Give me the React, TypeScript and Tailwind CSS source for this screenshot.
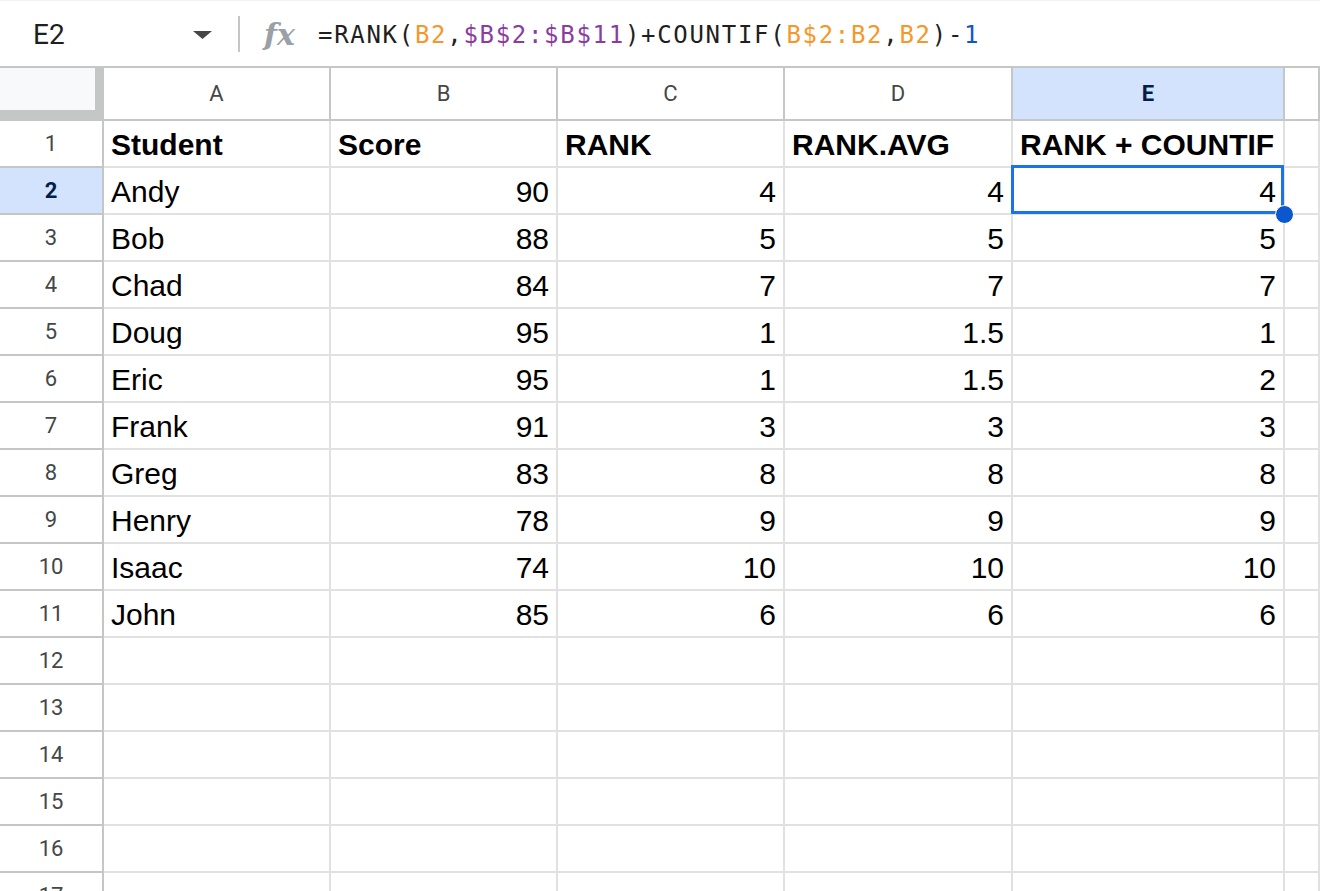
const rows: (string | number)[][] = [
  ['Andy', 90, 4, 4, 4],
  ['Bob', 88, 5, 5, 5],
  ['Chad', 84, 7, 7, 7],
  ['Doug', 95, 1, 1.5, 1],
  ['Eric', 95, 1, 1.5, 2],
  ['Frank', 91, 3, 3, 3],
  ['Greg', 83, 8, 8, 8],
  ['Henry', 78, 9, 9, 9],
  ['Isaac', 74, 10, 10, 10],
  ['John', 85, 6, 6, 6],
]

const headers = ['Student', 'Score', 'RANK', 'RANK.AVG', 'RANK + COUNTIF']
const letters = ['A', 'B', 'C', 'D', 'E', 'F']

function FormulaBar() {
  return (
    <div className="h-[68px] flex items-center border-t border-[#f1f3f4] border-b-2 border-b-[#c4c7c5] bg-white">
      <div className="w-[238px] flex items-center justify-between pl-[33px] pr-[26px] pt-[2px]">
        <span className="text-[28px] text-[#1f1f1f] font-['Roboto',sans-serif]">E2</span>
        <svg width="19" height="8" viewBox="0 0 19 8">
          <polygon points="0,0 19,0 9.5,8" fill="#444746" />
        </svg>
      </div>
      <div className="w-[2px] h-[36px] bg-[#c4c7c5]" />
      <span className="ml-[24px] w-[32px] text-[30px] italic font-bold text-[#9aa0a6] font-['DejaVu_Serif',serif] leading-none pt-[2px]">
        fx
      </span>
      <div className="ml-[22px] pt-[2px] text-[24px] tracking-[1.7px] whitespace-nowrap text-[#1f1f1f] font-['DejaVu_Sans_Mono',monospace]">
        <span>=RANK(</span>
        <span className="text-[#f6972b]">B2</span>
        <span>,</span>
        <span className="text-[#8b3d9f]">$B$2:$B$11</span>
        <span>)+COUNTIF(</span>
        <span className="text-[#f6972b]">B$2:B2</span>
        <span>,</span>
        <span className="text-[#f6972b]">B2</span>
        <span>)-</span>
        <span className="text-[#1155cc]">1</span>
      </div>
    </div>
  )
}

function RowHead({ n, active }: { n: number; active?: boolean }) {
  return (
    <div
      className={
        'h-[47px] border-r-2 border-b-2 border-[#c4c7c5] flex items-center justify-center text-[22px] font-["Roboto",sans-serif] ' +
        (active ? 'bg-[#d3e3fd] font-bold text-[#041e49]' : 'bg-white text-[#444746]')
      }
    >
      {n}
    </div>
  )
}

function Cell({ value, bold, right }: { value?: string | number; bold?: boolean; right?: boolean }) {
  return (
    <div
      className={
        'h-[47px] border-r-2 border-b-2 border-[#e1e1e1] flex items-center px-[7px] pt-[1px] text-[30px] text-black whitespace-nowrap overflow-hidden font-["Liberation_Sans",Arial,sans-serif] ' +
        (bold ? 'font-bold ' : '') +
        (right ? 'justify-end' : '')
      }
    >
      {value}
    </div>
  )
}

export default function App() {
  const total = 17
  return (
    <div className="w-[1320px] h-[891px] overflow-hidden bg-white">
      <FormulaBar />
      <div className="grid grid-cols-[104px_227px_227px_227px_228px_272px_1fr]">
        <div className="h-[53px] bg-[#c4c7c5]">
          <div className="w-[95px] h-[42px] bg-[#f8f9fa]" />
        </div>
        {letters.map((l) => (
          <div
            key={l}
            className={
              'h-[53px] border-r-2 border-b-2 border-[#c4c7c5] flex items-center justify-center text-[22px] font-["Roboto",sans-serif] ' +
              (l === 'E' ? 'bg-[#d3e3fd] font-bold text-[#041e49]' : 'bg-white text-[#444746]')
            }
          >
            {l === 'F' ? '' : l}
          </div>
        ))}

        <RowHead n={1} />
        {headers.map((h) => (
          <Cell key={h} value={h} bold />
        ))}
        <Cell />

        {rows.map((r, i) => (
          <div key={i} className="contents">
            <RowHead n={i + 2} active={i === 0} />
            <Cell value={r[0]} />
            <Cell value={r[1]} right />
            <Cell value={r[2]} right />
            <Cell value={r[3]} right />
            {i === 0 ? (
              <div className="relative">
                <Cell value={r[4]} right />
                <div className="absolute -top-[3px] -left-[2px] right-[1px] bottom-[1px] border-[3px] border-[#1a73e8]" />
                <div className="absolute top-[37px] left-[262px] w-[19px] h-[19px] rounded-full bg-[#0b57d0] border border-white" />
              </div>
            ) : (
              <Cell value={r[4]} right />
            )}
            <Cell />
          </div>
        ))}

        {Array.from({ length: total - 11 }, (_, k) => (
          <div key={'e' + k} className="contents">
            <RowHead n={k + 12} />
            <Cell />
            <Cell />
            <Cell />
            <Cell />
            <Cell />
            <Cell />
          </div>
        ))}
      </div>
    </div>
  )
}
